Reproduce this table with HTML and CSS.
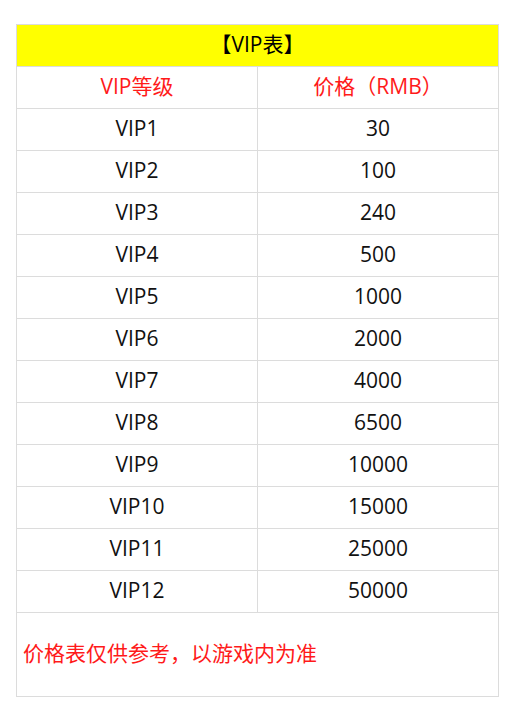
FILE: index.html
```html
<!DOCTYPE html>
<html lang="zh">
<head>
<meta charset="utf-8">
<link rel="stylesheet" href="styles.css">
</head>
<body>
<table class="vip">
  <tr><td class="title" colspan="2">【VIP表】</td></tr>
  <tr class="head"><td class="c1">VIP等级</td><td>价格（RMB）</td></tr>
  <tr><td class="c1">VIP1</td><td>30</td></tr>
  <tr><td class="c1">VIP2</td><td>100</td></tr>
  <tr><td class="c1">VIP3</td><td>240</td></tr>
  <tr><td class="c1">VIP4</td><td>500</td></tr>
  <tr><td class="c1">VIP5</td><td>1000</td></tr>
  <tr><td class="c1">VIP6</td><td>2000</td></tr>
  <tr><td class="c1">VIP7</td><td>4000</td></tr>
  <tr><td class="c1">VIP8</td><td>6500</td></tr>
  <tr><td class="c1">VIP9</td><td>10000</td></tr>
  <tr><td class="c1">VIP10</td><td>15000</td></tr>
  <tr><td class="c1">VIP11</td><td>25000</td></tr>
  <tr><td class="c1">VIP12</td><td>50000</td></tr>
  <tr><td class="note" colspan="2">价格表仅供参考，以游戏内为准</td></tr>
</table>
</body>
</html>
```
FILE: styles.css
```css
html, body {
  margin: 0;
  background: #fff;
}
body {
  padding: 24px 16px;
  font-family: "Open Sans", "Noto Sans CJK SC", sans-serif;
  font-size: 21px;
  color: #111;
}
.vip {
  border-collapse: collapse;
  width: 483px;
  table-layout: fixed;
}
.vip td {
  border: 1px solid #dcdcdc;
  height: 38px;
  padding: 0 0 3px;
  text-align: center;
  vertical-align: middle;
  line-height: 24px;
}
.vip .c1 {
  width: 240px;
}
.vip .title {
  background: #ffff00;
  color: #000;
}
.vip .head td {
  color: #ff1a1a;
}
.vip .note {
  height: 80px;
  text-align: left;
  padding-left: 6px;
  color: #ff1a1a;
}
```
